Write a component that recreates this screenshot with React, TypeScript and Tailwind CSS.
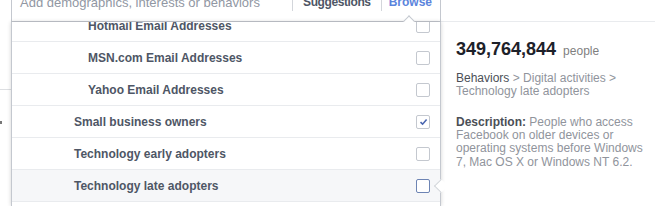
import React from "react"

type Row = {
  label: string
  sub?: boolean
  checked?: boolean
  hover?: boolean
}

const rows: Row[] = [
  { label: "Hotmail Email Addresses", sub: true },
  { label: "MSN.com Email Addresses", sub: true },
  { label: "Yahoo Email Addresses", sub: true },
  { label: "Small business owners", checked: true },
  { label: "Technology early adopters" },
  { label: "Technology late adopters", hover: true },
  { label: "" },
]

function Checkbox({ checked, hover }: { checked?: boolean; hover?: boolean }) {
  return (
    <span
      className={`flex h-[14px] w-[14px] items-center justify-center rounded-[2px] border bg-white ${
        hover ? "border-[#6d84b4]" : "border-[#c4c8cf]"
      }`}
    >
      {checked && (
        <svg width="9" height="8" viewBox="0 0 9 8">
          <path d="M1.5 4.2 L3.6 6.2 L7.6 1.6" fill="none" stroke="#4a66b0" strokeWidth="1.6" />
        </svg>
      )}
    </span>
  )
}

export default function App() {
  return (
    <div className="relative flex h-[206px] w-[655px] overflow-hidden bg-white font-['Liberation_Sans',Arial,sans-serif]">
      {/* page behind, left edge */}
      <div className="flex w-[11px] shrink-0 flex-col">
        <div className="mt-[89px] h-px bg-[#dddfe2]" />
        <div className="mt-[31px] h-[3px] w-[2px] bg-[#777]" />
      </div>

      {/* search + dropdown */}
      <div className="relative z-10 flex w-[430px] shrink-0 flex-col">
        <div className="flex h-[22px] items-start border-x border-b border-[#c4c8cf] bg-white">
          <span className="mt-[-5px] flex-1 pl-[8px] text-[13px] leading-[15px] text-[#9197a3]">
            Add demographics, interests or behaviors
          </span>
          <span className="h-[11px] w-px bg-[#d3d6db]" />
          <span className="mt-[-5px] px-[10px] text-[12px] font-bold leading-[15px] tracking-[-0.4px] text-[#4e5665]">
            Suggestions
          </span>
          <span className="h-[11px] w-px bg-[#d3d6db]" />
          <span className="mt-[-5px] pl-[7px] pr-[8px] text-[12px] font-bold leading-[15px] text-[#5b84dc]">
            Browse
          </span>
        </div>
        <span className="absolute left-[394px] top-[17px] h-[8px] w-[8px] rotate-45 border-l border-t border-[#c4c8cf] bg-white" />

        <div className="h-[184px] overflow-hidden border-x border-[#c4c8cf] bg-white shadow-[0_0_4px_rgba(0,0,0,0.18)]">
          <div className="mt-[-12px]">
            {rows.map((r, i) => (
              <div
                key={i}
                className={`flex h-[32px] items-center border-b border-[#e9ebee] pr-[10px] ${
                  r.sub ? "pl-[76px]" : "pl-[62px]"
                } ${r.hover ? "bg-[#f6f7f9]" : "bg-white"}`}
              >
                <span className="flex-1 text-[12px] font-bold text-[#4e5665]">{r.label}</span>
                {r.label && <Checkbox checked={r.checked} hover={r.hover} />}
              </div>
            ))}
          </div>
        </div>
      </div>

      {/* detail panel */}
      <div className="relative flex flex-1 flex-col">
        <div className="h-[22px] border-b border-[#e9ebee]" />
        <span className="absolute left-[-5px] top-[181px] z-20 h-[10px] w-[10px] rotate-45 border-b border-l border-[#d3d6db] bg-white" />
        <div className="flex flex-col pl-[15px] pr-[8px] pt-[17px]">
          <div className="flex items-baseline">
            <span className="text-[18px] font-bold leading-[20px] text-[#1d2129]">349,764,844</span>
            <span className="ml-[7px] text-[12px] leading-[20px] text-[#7f7f7f]">people</span>
          </div>
          <div className="mt-[11px] text-[12px] leading-[13.33px] text-[#90949c]">
            <span className="text-[#4b4f56]">Behaviors</span> &gt; Digital activities &gt; Technology late adopters
          </div>
          <div className="mt-[17px] text-[12px] leading-[13.33px] text-[#90949c]">
            <span className="font-bold text-[#4b4f56]">Description:</span> People who access Facebook on older
            devices or operating systems before Windows 7, Mac OS X or Windows NT 6.2.
          </div>
        </div>
      </div>
    </div>
  )
}
